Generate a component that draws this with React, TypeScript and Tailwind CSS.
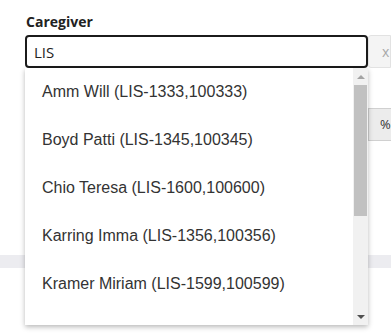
import React from 'react';

const caregivers = [
  'Amm Will (LIS-1333,100333)',
  'Boyd Patti (LIS-1345,100345)',
  'Chio Teresa (LIS-1600,100600)',
  'Karring Imma (LIS-1356,100356)',
  'Kramer Miriam (LIS-1599,100599)',
];

const App: React.FC = () => {
  return (
    <div className="relative min-h-[336px] w-[391px] overflow-hidden bg-white font-['Open_Sans',sans-serif]">
      <div className="pl-[25px] pt-[12px]">
        <label className="block pl-[1px] text-[14px] font-bold leading-[20px] text-[#222]">Caregiver</label>

        {/* search row */}
        <div className="mt-[3px] flex h-[33px]">
          <input
            readOnly
            value="LIS"
            className="h-[33px] w-[343px] shrink-0 rounded-[4px] border-2 border-[#1b1b1b] px-[7px] text-[15px] text-[#222] outline-none"
          />
          <div className="flex flex-1 items-center rounded-l-[3px] border border-[#e2e2e2] bg-[#f4f4f4] pl-[13px] text-[14px] text-[#a8a8a8]">
            x
          </div>
        </div>

        {/* second row, mostly hidden under the list */}
        <div className="mt-[40px] flex h-[33px]">
          <div className="w-[343px] shrink-0" />
          <div className="flex flex-1 items-center border-y border-l border-[#d0d0d0] bg-[#ececec] pl-[11px] text-[13px] text-[#333]">
            %
          </div>
        </div>
      </div>

      <div className="mt-[114px] h-[13px] bg-[#ececf0]" />

      {/* dropdown */}
      <div className="absolute left-[25px] top-[68px] flex h-[257px] w-[343px] bg-white shadow-[0_2px_5px_rgba(0,0,0,0.28)]">
        <ul className="flex-1 overflow-hidden font-['Liberation_Sans',Arial,sans-serif] text-[16px] text-[#333]">
          {caregivers.map((c) => (
            <li key={c} className="flex h-[48px] items-center pl-[17px]">
              {c}
            </li>
          ))}
        </ul>
        <div className="flex w-[15px] flex-col items-center bg-[#f1f1f1]">
          <div className="flex h-[17px] items-center justify-center">
            <div className="h-0 w-0 border-x-[4px] border-b-[4px] border-x-transparent border-b-[#a3a3a3]" />
          </div>
          <div className="h-[131px] w-[13px] bg-[#c1c1c1]" />
          <div className="flex-1" />
          <div className="flex h-[17px] items-center justify-center">
            <div className="h-0 w-0 border-x-[4px] border-t-[4px] border-x-transparent border-t-[#505050]" />
          </div>
        </div>
      </div>
    </div>
  );
};

export default App;
